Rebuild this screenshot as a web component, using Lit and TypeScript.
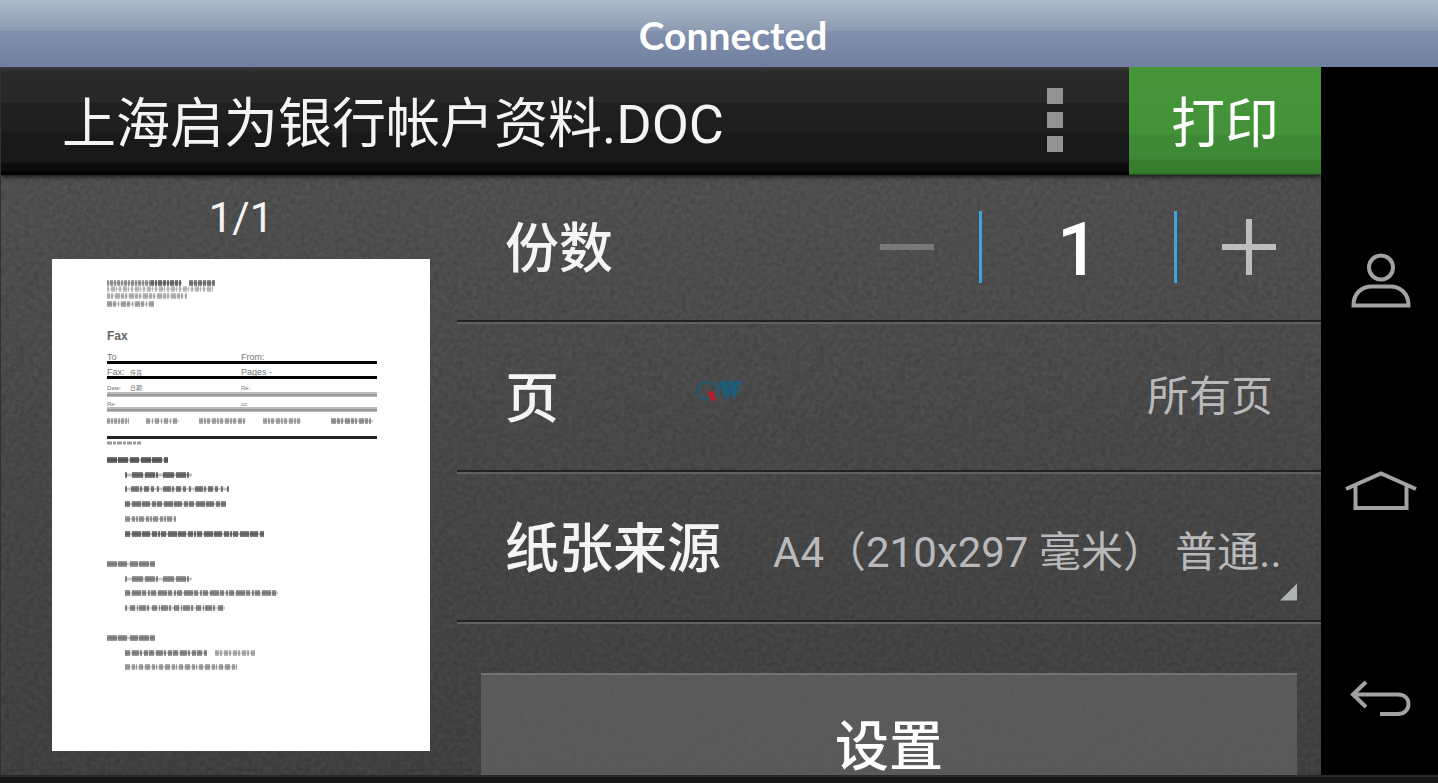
import { LitElement, html, css, svg } from "lit";
import { customElement, state } from "lit/decorators.js";

/* x, y, total width and darkness of each line of fine print on the page thumbnail */
type Line = [number, number, number, number, string];

const LINES: Line[] = [
  [55, 24, 44, 0.35, "2 1 3 1"],
  [99, 24, 31, 0.5, "3 1 2 1 4 1"],
  [137, 24, 26, 0.45, "4 1 3 1"],
  [55, 30, 106, 0.22, "2 2 4 1 1 2"],
  [55, 37, 80, 0.25, "3 1 2 2 5 1"],
  [55, 45, 47, 0.3, "5 1 3 2 1 2"],
  [55, 162, 22, 0.3, "3 1 2 1"],
  [94, 162, 33, 0.3, "4 2 1 2"],
  [147, 162, 47, 0.3, "4 1 2 1 3 2"],
  [211, 162, 38, 0.3, "4 1 2 1 3 2"],
  [279, 162, 42, 0.35, "5 1 3 1 2 2"],
  [55, 201, 61, 0.55, "10 1 10 2 9 2"],
  [73, 216, 67, 0.5, "2 5 11 2 10 1"],
  [73, 230, 104, 0.45, "2 4 8 1 2 2 5 2 3 3"],
  [73, 245, 101, 0.45, "5 2 9 1 8 2 4 1"],
  [73, 260, 51, 0.35, "5 2 3 1 2 1"],
  [73, 275, 139, 0.5, "5 2 9 1 8 2 5 1 2 1"],
  [55, 305, 48, 0.4, "10 1 9 3 8 1"],
  [73, 320, 67, 0.4, "2 5 11 2 10 1"],
  [73, 334, 153, 0.4, "5 2 9 1 4 2 2 1"],
  [73, 349, 100, 0.4, "2 3 5 2 1 1 7 1"],
  [55, 379, 48, 0.4, "10 1 9 3 8 1"],
  [73, 394, 82, 0.4, "5 2 7 1 2 2 4 1"],
  [163, 394, 40, 0.28, "4 1 2 2"],
  [73, 408, 112, 0.32, "5 2 3 1 1 2 4 2"],
];

@customElement("page-thumb")
export class PageThumb extends LitElement {
  static styles = css`
    :host { display: block; }
    svg { display: block; width: 100%; height: auto; background: #fff; }
    .label { font: 9px "Liberation Sans", sans-serif; fill: #777; }
    .tiny { font: 6px "Liberation Sans", "Noto Sans CJK SC", sans-serif; fill: #777; }
    .logo { font: 700 12px "Liberation Sans", sans-serif; fill: #666; }
  `;

  render() {
    return html`
      <svg viewBox="0 0 378 492" role="img" aria-label="1/1">
        ${LINES.map(([x, y, w, dark, dash]) => svg`
          <line x1=${x} x2=${x + w} y1=${y} y2=${y} stroke="#000" stroke-opacity=${dark} stroke-width="6" stroke-dasharray=${dash} />
          <line x1=${x} x2=${x + w} y1=${y} y2=${y} stroke="#000" stroke-opacity=${dark * 0.5} stroke-width="3" />`)}
        <line x1="55" x2="89" y1="184" y2="184" stroke="#999" stroke-width="3" stroke-dasharray="5 1 3 1" />
        <text class="logo" x="55" y="81">Fax</text>
        <text class="label" x="55" y="101">To</text>
        <text class="label" x="189" y="101">From:</text>
        <text class="label" x="55" y="116">Fax:</text>
        <text class="tiny" x="78" y="116">传真</text>
        <text class="label" x="189" y="116">Pages -</text>
        <text class="tiny" x="55" y="131">Date:</text>
        <text class="tiny" x="78" y="131">日期</text>
        <text class="tiny" x="189" y="131">Re:</text>
        <text class="tiny" x="55" y="147">Re:</text>
        <text class="tiny" x="189" y="147">cc:</text>
        <rect x="55" y="102" width="270" height="3" fill="#000" />
        <rect x="55" y="117" width="270" height="3" fill="#000" />
        <rect x="55" y="133" width="270" height="5" fill="#bbb" />
        <rect x="55" y="135" width="270" height="2" fill="#999" />
        <rect x="55" y="148" width="270" height="5" fill="#bbb" />
        <rect x="55" y="150" width="270" height="2" fill="#999" />
        <rect x="55" y="177" width="270" height="3" fill="#222" />
      </svg>`;
  }
}

@customElement("app-root")
export class AppRoot extends LitElement {
  @state() copies = 1;

  static styles = css`
    :host {
      display: flex;
      flex-direction: column;
      height: 100vh;
      overflow: hidden;
      background: #191919;
      color: #f4f4f4;
      font-family: Roboto, "Noto Sans CJK SC", sans-serif;
    }
    * { box-sizing: border-box; }
    button, input, select {
      margin: 0;
      padding: 0;
      border: 0;
      border-radius: 0;
      background: none;
      color: inherit;
      font: inherit;
      appearance: none;
    }
    svg { display: block; }
    h1, h2, p { margin: 0; font-weight: 400; }

    .status {
      flex: none;
      height: 67px;
      padding: 2px 0 0 28px;
      display: grid;
      place-items: center;
      background: linear-gradient(#afbac9 0, #8c9bb1 31px, #8190ac 31px, #7080a0 100%);
      color: #fff;
      font: 700 39px/48px Lato, sans-serif;
    }
    .device {
      flex: 1;
      min-height: 0;
      display: grid;
      grid-template-columns: minmax(0, 1fr) 117px;
    }
    .screen {
      position: relative;
      min-height: 0;
      display: flex;
      flex-direction: column;
      overflow: hidden;
      border-left: 1px solid #2f313a;
      background:
        url("data:image/svg+xml,%3Csvg xmlns='http://www.w3.org/2000/svg' width='400' height='400'%3E%3Cfilter id='n' x='0' y='0' width='100%25' height='100%25' color-interpolation-filters='sRGB'%3E%3CfeTurbulence type='fractalNoise' baseFrequency='.21' numOctaves='2' stitchTiles='stitch'/%3E%3CfeColorMatrix values='0 0 0 0 0 0 0 0 0 0 0 0 0 0 0 .2 .2 0 0 -.13'/%3E%3C/filter%3E%3Crect width='400' height='400' filter='url(%23n)'/%3E%3C/svg%3E"),
        linear-gradient(#575757, #444);
    }
    .bar {
      flex: none;
      height: 108px;
      display: flex;
      align-items: stretch;
      background: linear-gradient(#3a3a3a 0, #292929 6px, #282828 35px, #202020 36px, #1f1f1f 65px, #191919 66px, #181818 95px, #0d0d0d 96px, #0c0c0c 103px, #000 106px);
      box-shadow: 0 2px 4px #000a;
    }
    .title, .print {
      padding-top: 8px;
      font-size: 54px;
      line-height: 100px;
    }
    .title {
      flex: 1;
      min-width: 0;
      padding-left: 61px;
      white-space: nowrap;
      overflow: hidden;
    }
    .more {
      width: 148px;
      padding-bottom: 2px;
      display: grid;
      place-items: center;
    }
    .print {
      width: 192px;
      background: linear-gradient(#469639 0, #439238 67px, #3f8a36 68px, #3e8935 92px, #387e30 93px, #377c2f 106px, #255c20 107px);
      color: #fff;
    }
    .body {
      flex: 1;
      min-height: 0;
      display: grid;
      grid-template-columns: 456px minmax(0, 1fr);
    }
    .preview {
      padding: 17px 27px 0 51px;
    }
    .pages {
      padding-bottom: 15px;
      font-size: 42px;
      line-height: 52px;
      text-align: center;
    }
    .row {
      height: 150px;
      padding: 0 24px 3px 48px;
      display: flex;
      align-items: center;
      justify-content: space-between;
      border-bottom: 2px solid #606060;
      box-shadow: inset 0 -2px #242124;
    }
    .row.first { height: 149px; }
    .name {
      flex: none;
      padding-top: 6px;
      font-size: 54px;
      line-height: 72px;
      font-weight: 500;
    }
    .value {
      padding-right: 24px;
      color: #b9b9bb;
      font-size: 42px;
      line-height: 60px;
    }
    .stepper {
      display: flex;
      align-items: center;
      height: 72px;
    }
    .step {
      width: 120px;
      height: 72px;
      display: grid;
      place-items: center;
    }
    .step.less { padding-right: 24px; }
    .step.plus { padding-left: 24px; }
    .step:disabled { color: #777; }
    .count {
      width: 198px;
      height: 72px;
      padding-top: 4px;
      border: solid #3fa3df;
      border-width: 0 3px;
      color: #fff;
      text-align: center;
      font-size: 74px;
      line-height: 68px;
      font-weight: 500;
    }
    .source {
      position: relative;
      padding-top: 12px;
    }
    .source select {
      display: block;
      width: 524px;
      color: #b9b9bb;
      font-size: 42px;
      line-height: 60px;
      height: 60px;
    }
    .corner {
      position: absolute;
      right: 0;
      bottom: -18px;
      width: 17px;
      height: 17px;
      background: #aeb4b3;
      clip-path: polygon(100% 0, 100% 100%, 0 100%);
      pointer-events: none;
    }
    .settings {
      display: block;
      width: calc(100% - 48px);
      margin: 49px 24px 0;
      padding-top: 46px;
      border-top: 2px solid #707476;
      background: #636465bb;
      color: #fff;
      font-size: 54px;
      line-height: 54px;
      font-weight: 500;
    }
    .mark {
      position: absolute;
      left: 695px;
      top: 313px;
    }
    .nav {
      display: flex;
      flex-direction: column;
      align-items: center;
      gap: 149px;
      padding: 184px 0 0 3px;
      background: #000;
      color: #a2a2a2;
    }
    .nav button { flex: none; height: 60px; }
    .foot {
      flex: none;
      height: 8px;
      border-top: 2px solid #29292b;
      background: #171718;
    }
  `;

  render() {
    return html`
      <header class="status">Connected</header>
      <div class="device">
        <main class="screen">
          <div class="bar">
            <h1 class="title">上海启为银行帐户资料.DOC</h1>
            <button class="more" aria-label="更多">
              <svg width="16" height="64" viewBox="0 0 16 64" fill="#929292">
                <rect width="16" height="16" /><rect y="24" width="16" height="16" /><rect y="48" width="16" height="16" />
              </svg>
            </button>
            <button class="print">打印</button>
          </div>
          <div class="body">
            <section class="preview">
              <p class="pages">1/1</p>
              <page-thumb></page-thumb>
            </section>
            <section>
              <div class="row first">
                <label class="name" for="copies">份数</label>
                <div class="stepper">
                  <button class="step less" aria-label="减少" ?disabled=${this.copies <= 1} @click=${() => this.copies--}>
                    <svg width="54" height="56"><path d="M0 28H54" stroke="currentColor" stroke-width="6" /></svg>
                  </button>
                  <input class="count" id="copies" inputmode="numeric" .value=${String(this.copies)}
                    @change=${(e: Event) => { this.copies = Math.max(1, Number((e.target as HTMLInputElement).value) || 1); }} />
                  <button class="step plus" aria-label="增加" @click=${() => this.copies++}>
                    <svg width="54" height="56"><path d="M0 28H54M27 0V56" stroke="#bdbdbd" stroke-width="6" /></svg>
                  </button>
                </div>
              </div>
              <div class="row">
                <h2 class="name">页</h2>
                <button class="value">所有页</button>
              </div>
              <div class="row">
                <label class="name" for="source">纸张来源</label>
                <div class="source">
                  <select id="source"><option>A4（210x297 毫米） 普通..</option></select>
                  <span class="corner"></span>
                </div>
              </div>
              <button class="settings">设置</button>
            </section>
          </div>
          <svg class="mark" width="47" height="22" viewBox="0 0 47 22" aria-hidden="true">
            <path d="M13 19.500C6 20 1.500 15.500 1.500 11C1.500 5.500 6 2 12 2C18 2 22 6 22 11C22 14 20.500 16.500 18.500 18" fill="none" stroke="#1d5d77" stroke-width="2" />
            <path d="M11.500 11.500H18L20.500 20.500H14.500Z" fill="#b0202c" />
            <path d="M22 1H30L34.500 12L30 20.500Z" fill="#1d5d77" />
            <path d="M31.500 1H38.500L42.500 11L37.500 20.500Z" fill="#1d5d77" />
            <path d="M39.500 1H47L43 9Z" fill="#1d5d77" />
          </svg>
        </main>
        <nav class="nav">
          <button aria-label="用户">
            <svg width="72" height="60" viewBox="0 0 72 60" fill="none" stroke="currentColor" stroke-width="4">
              <circle cx="36" cy="16.500" r="12" />
              <path d="M8.500 54.500C8.500 42 17 35.500 27 35.500H45C55 35.500 63.500 42 63.500 54.500Z" />
            </svg>
          </button>
          <button aria-label="主页">
            <svg width="72" height="60" viewBox="0 0 72 60" fill="none" stroke="currentColor" stroke-width="4">
              <path d="M1 29L36 13.500L71 29M10.500 25V48H61.500V25" />
            </svg>
          </button>
          <button aria-label="返回">
            <svg width="72" height="60" viewBox="0 0 72 60" fill="none" stroke="currentColor" stroke-width="4">
              <path d="M21 13L8 25.500L21 38M9 25.500H53C59 25.500 63.500 29 63.500 35C63.500 41 59 45 53 45H35" />
            </svg>
          </button>
        </nav>
      </div>
      <footer class="foot"></footer>`;
  }
}
